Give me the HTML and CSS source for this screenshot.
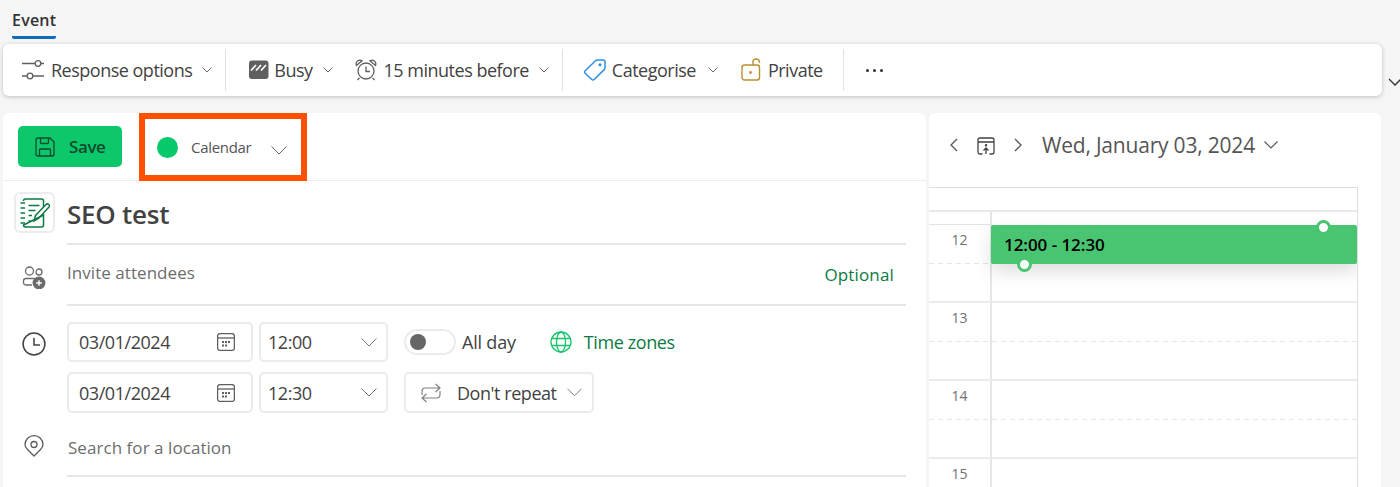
FILE: index.html
```html
<!DOCTYPE html>
<html lang="en">
<head>
<meta charset="utf-8">
<title>Event</title>
<link rel="stylesheet" href="styles.css">
</head>
<body>
<div class="tabs"><span class="tab">Event</span></div>
<div class="toolbar">
  <div class="tool tool-response">
    <svg class="ic22" viewBox="0 0 22 22"><path d="M0 4.500h13M19 4.500h3M0 17h5M11 17h11" /><circle cx="16" cy="4.500" r="2.800"/><circle cx="8" cy="17" r="2.800"/></svg>
    <span>Response options</span>
    <svg class="chev-sm" viewBox="0 0 10 6"><path d="M.5.5 5 5 9.500.5"/></svg>
  </div>
  <div class="sep"></div>
  <div class="tool tool-busy">
    <svg class="ic-busy" viewBox="0 0 20 20"><rect x="0" y="0.500" width="19.500" height="18.500" rx="3" fill="#5f5f5f" stroke="none"/><path d="M2 10.500l5-5.500M7 10.500l5-5.500M12 10.500l5-5.500" stroke="#fff" stroke-width="1.700"/></svg>
    <span>Busy</span>
    <svg class="chev-sm" viewBox="0 0 10 6"><path d="M.5.5 5 5 9.500.5"/></svg>
  </div>
  <div class="tool tool-alarm">
    <svg class="ic22" viewBox="0 0 22 22"><circle cx="11" cy="12" r="8"/><path d="M11 7.500V12.500H15M4.500 19l-2 2M17.500 19l2 2"/><path d="M1.500 6.500Q.5 3.500 2.500 2T7 1.800zM20.500 6.500q1-3-1-4.500T15 1.800z"/></svg>
    <span>15 minutes before</span>
    <svg class="chev-sm" viewBox="0 0 10 6"><path d="M.5.5 5 5 9.500.5"/></svg>
  </div>
  <div class="sep"></div>
  <div class="tool tool-cat">
    <svg class="ic22 blue" viewBox="0 0 22 22"><path d="M1.200 11.800 11.500 1.800Q12.300 1 13.500 1H19q2 0 2 2v5.800q0 1-.8 1.800L10.200 20.500q-1.200 1.100-2.400 0L1.200 14.200q-1.100-1.200 0-2.400z"/><circle cx="16" cy="5.800" r=".8"/></svg>
    <span>Categorise</span>
    <svg class="chev-sm" viewBox="0 0 10 6"><path d="M.5.500 5 5 9.500.5"/></svg>
  </div>
  <div class="tool tool-private">
    <svg class="ic-lock" viewBox="0 0 20 23"><rect x="1" y="7" width="17.500" height="15" rx="2.500"/><path d="M12 7V4q0-3 3-3t3.500 3v1"/><circle cx="9.500" cy="14.500" r=".7"/></svg>
    <span>Private</span>
  </div>
  <div class="sep sep-last"></div>
  <div class="dots"><i></i><i></i><i></i></div>
  <svg class="chev-out" viewBox="0 0 14 8"><path d="M1 1l6 6 6-6"/></svg>
</div>

<div class="main">
  <section class="left">
    <header class="cmd">
      <button class="save">
        <svg class="ic-save" viewBox="0 0 20 20"><path d="M1 3q0-2 2-2h12l4 4v12q0 2-2 2H3q-2 0-2-2z"/><path d="M5.500 1v4.500q0 1 1 1h6q1 0 1-1V1M4.500 19v-6q0-1 1-1h9q1 0 1 1v6"/></svg>
        <span>Save</span>
      </button>
      <div class="calbox">
        <i class="caldot"></i>
        <span class="calname">Calendar</span>
        <svg class="chev-cal" viewBox="0 0 16 9"><path d="M.5.500 8 8l7.500-7.500"/></svg>
      </div>
    </header>

    <div class="row row-title">
      <div class="gut">
        <div class="notebox">
          <svg class="ic-note" viewBox="0 0 30 30"><path d="M3.500 3q0-2 2-2h16q2 0 2 2v6M23.500 17v10q0 2-2 2h-16q-2 0-2-2z"/><path d="M.5 5H5M.5 10H5M.5 15H5M.5 20H5M.5 25H5M8.500 7.500h11M8.500 12.500h7M8.500 17.500h3.500M8.500 23h2.500"/><path d="M14 23l1.500-5.500L26 6.500q1.500-1.200 2.800 0t0 2.800L18.500 20.500z"/></svg>
        </div>
      </div>
      <div class="field title-field"><h1>SEO test</h1></div>
    </div>

    <div class="row row-invite">
      <div class="gut">
        <svg class="ic-people" viewBox="0 0 24 24"><circle cx="7.500" cy="6" r="4"/><circle cx="17" cy="7" r="3"/><path d="M10 20H4q-2.500 0-2.500-2.500V16q0-2.500 2.500-2.500h7q1.500 0 2.500.8"/><circle cx="17" cy="18" r="5.800" fill="#6a6a6a"/><path d="M17 15.200v5.600M14.200 18h5.600" stroke="#fff" stroke-width="1.400"/></svg>
      </div>
      <div class="field invite-field">
        <span class="muted">Invite attendees</span>
        <span class="optional">Optional</span>
      </div>
    </div>

    <div class="row row-when">
      <div class="gut">
        <svg class="ic-clock" viewBox="0 0 22 22"><circle cx="11" cy="11" r="10"/><path d="M11 5.500V12h5.500"/></svg>
      </div>
      <div class="when">
        <div class="input date"><span>03/01/2024</span><svg class="ic-cal" viewBox="0 0 18 18"><rect x=".6" y=".6" width="16.800" height="16.800" rx="2.500"/><path d="M.6 5h16.800"/><path class="dotp" d="M5 8h2v2H5zM8 8h2v2H8zM11 8h2v2h-2zM5 11.500h2v2H5zM8 11.500h2v2H8z"/></svg></div>
        <div class="input time"><span>12:00</span><svg class="chev-in" viewBox="0 0 16 9"><path d="M.5.500 8 8l7.500-7.500"/></svg></div>
        <div class="allday">
          <span class="toggle"><i></i></span>
          <span class="allday-label">All day</span>
          <svg class="ic-globe" viewBox="0 0 22 22"><circle cx="11" cy="11" r="10"/><ellipse cx="11" cy="11" rx="4.500" ry="10"/><path d="M2 7.500h18M2 14.500h18"/></svg>
          <span class="tz">Time zones</span>
        </div>
        <div class="input date"><span>03/01/2024</span><svg class="ic-cal" viewBox="0 0 18 18"><rect x=".6" y=".6" width="16.800" height="16.800" rx="2.500"/><path d="M.6 5h16.800"/><path class="dotp" d="M5 8h2v2H5zM8 8h2v2H8zM11 8h2v2h-2zM5 11.500h2v2H5zM8 11.500h2v2H8z"/></svg></div>
        <div class="input time"><span>12:30</span><svg class="chev-in" viewBox="0 0 16 9"><path d="M.5.500 8 8l7.500-7.500"/></svg></div>
        <div class="input repeat">
          <svg class="ic-repeat" viewBox="0 0 22 20"><path d="M2 12V8.500q0-3.500 3.500-3.500H20M15.500 1l4.500 4-4.500 4M20 8v3.500q0 3.500-3.500 3.500H2M6.500 11 2 15l4.500 4"/></svg>
          <span>Don't repeat</span>
          <svg class="chev-rep" viewBox="0 0 16 9"><path d="M.5.500 8 8l7.500-7.500"/></svg>
        </div>
      </div>
    </div>

    <div class="row row-loc">
      <div class="gut">
        <svg class="ic-pin" viewBox="0 0 20 22"><path d="M10 21 3.500 14.500Q1 12 1 9.500a9 8.800 0 0 1 18 0q0 2.500-2.500 5z"/><circle cx="10" cy="9.500" r="3"/></svg>
      </div>
      <div class="field loc-field"><span class="muted">Search for a location</span></div>
    </div>
  </section>

  <section class="right">
    <header class="datebar">
      <svg class="nav" viewBox="0 0 8 14"><path d="M7 1 1 7l6 6"/></svg>
      <svg class="ic-today" viewBox="0 0 18 18"><path d="M5.500 17H3q-2 0-2-2V3q0-2 2-2h12q2 0 2 2v12q0 2-2 2h-2.500M1 5h16M9 17V11M6.500 13.500 9 11l2.500 2.500"/><circle cx="9" cy="8.200" r=".6"/></svg>
      <svg class="nav" viewBox="0 0 8 14"><path d="M1 1l6 6-6 6"/></svg>
      <span class="datelabel">Wed, January 03, 2024</span>
      <svg class="chev-date" viewBox="0 0 14 8"><path d="M.5.500 7 7 13.500.5"/></svg>
    </header>
    <div class="grid">
      <div class="allrow"></div>
      <div class="hour hour-top"><div class="hcol"></div><div class="dcol"></div></div>
      <div class="hour h12">
        <div class="hcol"><span>12</span></div>
        <div class="dcol"></div>
        <div class="event"><b>12:00 - 12:30</b><i class="hd hd-top"></i><i class="hd hd-bot"></i></div>
      </div>
      <div class="hour"><div class="hcol"><span>13</span></div><div class="dcol"></div></div>
      <div class="hour"><div class="hcol"><span>14</span></div><div class="dcol"></div></div>
      <div class="hour"><div class="hcol"><span>15</span></div><div class="dcol"></div></div>
    </div>
  </section>
</div>
</body>
</html>
```

FILE: styles.css
```css
* { box-sizing: border-box; }
html, body { margin: 0; height: 487px; overflow: hidden; }
body { background: #f5f5f5; font-family: "Open Sans", "Noto Sans", sans-serif; color: #424242; font-size: 18px; }
svg { display: block; fill: none; stroke: #5f5f5f; stroke-width: 1.300; flex: none; }

.tabs { height: 44px; padding: 7px 0 0 12px; }
.tab { display: inline-block; height: 30px; border-bottom: 3px solid #0f6cbd; border-radius: 0 0 2px 2px; font-size: 16px; font-weight: 600; line-height: 22px; letter-spacing: .2px; color: #333; }

.toolbar { position: relative; display: flex; align-items: center; width: 1379px; height: 52px; margin-left: 3px; background: #fff; border-radius: 6px; box-shadow: 0 1px 4px rgba(0,0,0,.22); }
.tool { display: flex; align-items: center; white-space: nowrap; letter-spacing: -.5px; }
.ic22 { width: 22px; height: 22px; }
.ic22.blue { stroke: #2b8fe8; stroke-width: 1.500; }
.ic-busy { width: 20px; height: 20px; }
.ic-lock { width: 20px; height: 23px; margin-bottom: 2px; stroke: #b8912f; stroke-width: 1.400; }
.chev-sm { width: 10px; height: 6px; stroke: #666; stroke-width: 1; }
.tool-response { margin-left: 19px; }
.tool-response span { margin-left: 7px; }
.tool-response .chev-sm { margin-left: 10px; }
.sep { width: 1px; height: 42px; background: #e2e2e2; margin-left: 13px; }
.tool-busy { margin-left: 23px; }
.tool-busy span { margin-left: 5px; }
.tool-busy .chev-sm { margin-left: 10px; }
.tool-alarm { margin-left: 22px; }
.tool-alarm span { margin-left: 7px; }
.tool-alarm .chev-sm { margin-left: 10px; }
.tool-cat { margin-left: 21px; }
.tool-cat span { margin-left: 6px; }
.tool-cat .chev-sm { margin-left: 12px; }
.tool-private { margin-left: 23px; }
.tool-private span { margin-left: 7px; }
.sep-last { margin-left: 20px; }
.dots { display: flex; gap: 4px; margin-left: 22px; }
.dots i { width: 3px; height: 3px; background: #333; border-radius: 50%; }
.chev-out { position: absolute; left: 1385px; top: 34px; width: 14px; height: 8px; stroke: #333; stroke-width: 1.300; }

.main { display: flex; gap: 3px; margin: 17px 0 0 3px; height: 374px; }
.left { width: 923px; background: #fff; border-radius: 6px 6px 0 0; }
.right { width: 452px; background: #fff; border-radius: 6px 6px 0 0; }

.cmd { display: flex; height: 68px; border-bottom: 1px solid #eee; }
.save { display: flex; align-items: center; width: 104px; height: 41px; margin: 13px 0 0 15px; padding: 0 0 0 17px; border: 0; border-radius: 5px; background: #0cc86a; font: 600 17px "Open Sans", sans-serif; letter-spacing: -.4px; color: #0e4a2c; }
.ic-save { width: 20px; height: 20px; stroke: #0e4a2c; }
.save span { margin-left: 14px; }
.calbox { display: flex; align-items: center; width: 168px; height: 68px; margin-left: 17px; border: 6px solid #ff4f00; }
.caldot { width: 21px; height: 21px; border-radius: 50%; background: #05c96a; margin-left: 12px; }
.calname { margin-left: 13px; font-size: 15px; letter-spacing: -.3px; color: #555; }
.chev-cal { width: 16px; height: 9px; margin: 6px 0 0 20px; stroke: #666; stroke-width: 1; }

.row { display: grid; grid-template-columns: 64px 1fr; padding-right: 20px; }
.gut { display: flex; }
.field { border-bottom: 2px solid #e6e6e6; }
.row-title { height: 64px; }
.notebox { display: flex; align-items: center; justify-content: center; width: 41px; height: 41px; margin: 11px 0 0 11px; border: 2px solid #ececec; border-radius: 6px; }
.ic-note { width: 30px; height: 30px; stroke: #0d7a43; stroke-width: 1.500; }
.title-field h1 { margin: 0; padding-top: 15px; font-size: 26px; line-height: 36px; font-weight: 600; letter-spacing: -.25px; color: #424242; }
.row-invite { height: 61px; }
.ic-people { width: 24px; height: 24px; margin: 20px 0 0 19px; stroke: #6a6a6a; }
.invite-field { display: flex; justify-content: space-between; padding-top: 16px; }
.muted { color: #6d6d6d; font-size: 17px; letter-spacing: .05px; line-height: 24px; }
.optional { margin-top: 2px; color: #0d7a43; font-size: 17px; letter-spacing: .15px; line-height: 24px; margin-right: 12px; }

.row-when { height: 124px; }
.ic-clock { width: 24px; height: 24px; margin: 26px 0 0 19px; stroke: #424242; stroke-width: 1.400; }
.when { display: grid; grid-template-columns: 186px 129px 1fr; grid-template-rows: 40px 41px; column-gap: 6px; row-gap: 10px; padding-top: 16px; }
.input { display: flex; align-items: center; border: 2px solid #ebebeb; border-radius: 5px; letter-spacing: -.45px; white-space: nowrap; }
.date { justify-content: space-between; padding: 0 16px 0 10px; }
.time { justify-content: space-between; padding: 0 9px 0 7px; }
.ic-cal { width: 18px; height: 18px; }
.dotp { fill: #5f5f5f; stroke: none; }
.chev-in { width: 16px; height: 9px; stroke: #777; stroke-width: 1; }
.allday { display: flex; align-items: center; margin-left: 10px; height: 40px; white-space: nowrap; letter-spacing: -.2px; }
.toggle { display: flex; align-items: center; width: 52px; height: 26px; padding-left: 4px; border: 2px solid #ebebeb; border-radius: 13px; }
.toggle i { width: 16px; height: 16px; border-radius: 50%; background: #666; }
.allday-label { margin-left: 6px; }
.ic-globe { width: 22px; height: 22px; margin-left: 34px; stroke: #12c46b; }
.tz { margin-left: 12px; color: #0d7a43; letter-spacing: -.4px; }
.repeat { width: 190px; margin-left: 10px; padding-left: 14px; }
.ic-repeat { width: 22px; height: 20px; stroke: #808080; stroke-width: 1.200; }
.repeat span { margin-left: 15px; }
.chev-rep { width: 15px; height: 9px; margin-left: 10px; stroke: #777; stroke-width: 1; }
.row-loc { height: 47px; }
.ic-pin { width: 20px; height: 22px; margin: 5px 0 0 21px; stroke: #5a5a5a; }
.loc-field { height: 47px; padding: 5px 0 0 1px; }

.datebar { display: flex; align-items: center; height: 74px; padding: 0 0 10px 21px; }
.nav { width: 8px; height: 14px; stroke: #555; }
.ic-today { width: 18px; height: 18px; margin: 1px 19px 0 19px; stroke: #424242; }
.datelabel { margin-left: 20px; font-size: 21px; letter-spacing: -.2px; color: #555; white-space: nowrap; }
.chev-date { width: 14px; height: 8px; margin-left: 9px; stroke: #555; stroke-width: 1.100; }

.grid { width: 429px; height: 300px; overflow: hidden; border: solid #dedede; border-width: 1px 1px 0 0; }
.allrow { height: 24px; border-bottom: 2px solid #e9e9e9; }
.hour { position: relative; display: grid; grid-template-columns: 63px 1fr; height: 78px; border-bottom: 2px solid #ebebeb; }
.hour-top { height: 13px; border-bottom: 0; }
.hour-top .hcol { border-bottom: 1px solid #e2e2e2; }
.hcol { border-right: 2px solid #e6e6e6; text-align: center; font-size: 14px; color: #707070; padding-top: 5px; line-height: 20px; }
.hour:not(.hour-top) { background: repeating-linear-gradient(90deg, #e6e6e6 0 5px, #fff 5px 9px) 0 38px/100% 1px no-repeat; }
.dcol { min-width: 0; }
.event { position: absolute; left: 62px; top: 0; width: 366px; height: 39px; padding-left: 13px; background: #49c470; border-radius: 2px; box-shadow: 0 8px 18px rgba(0,0,0,.13); line-height: 39px; color: #000; }
.event b { font-size: 17px; font-weight: 600; letter-spacing: -.05px; }
.hd { position: absolute; width: 15px; height: 15px; border-radius: 50%; background: #fff; border: 3px solid #49c470; }
.hd-top { left: 325px; top: -5px; }
.hd-bot { left: 26px; top: 32px; }
```
